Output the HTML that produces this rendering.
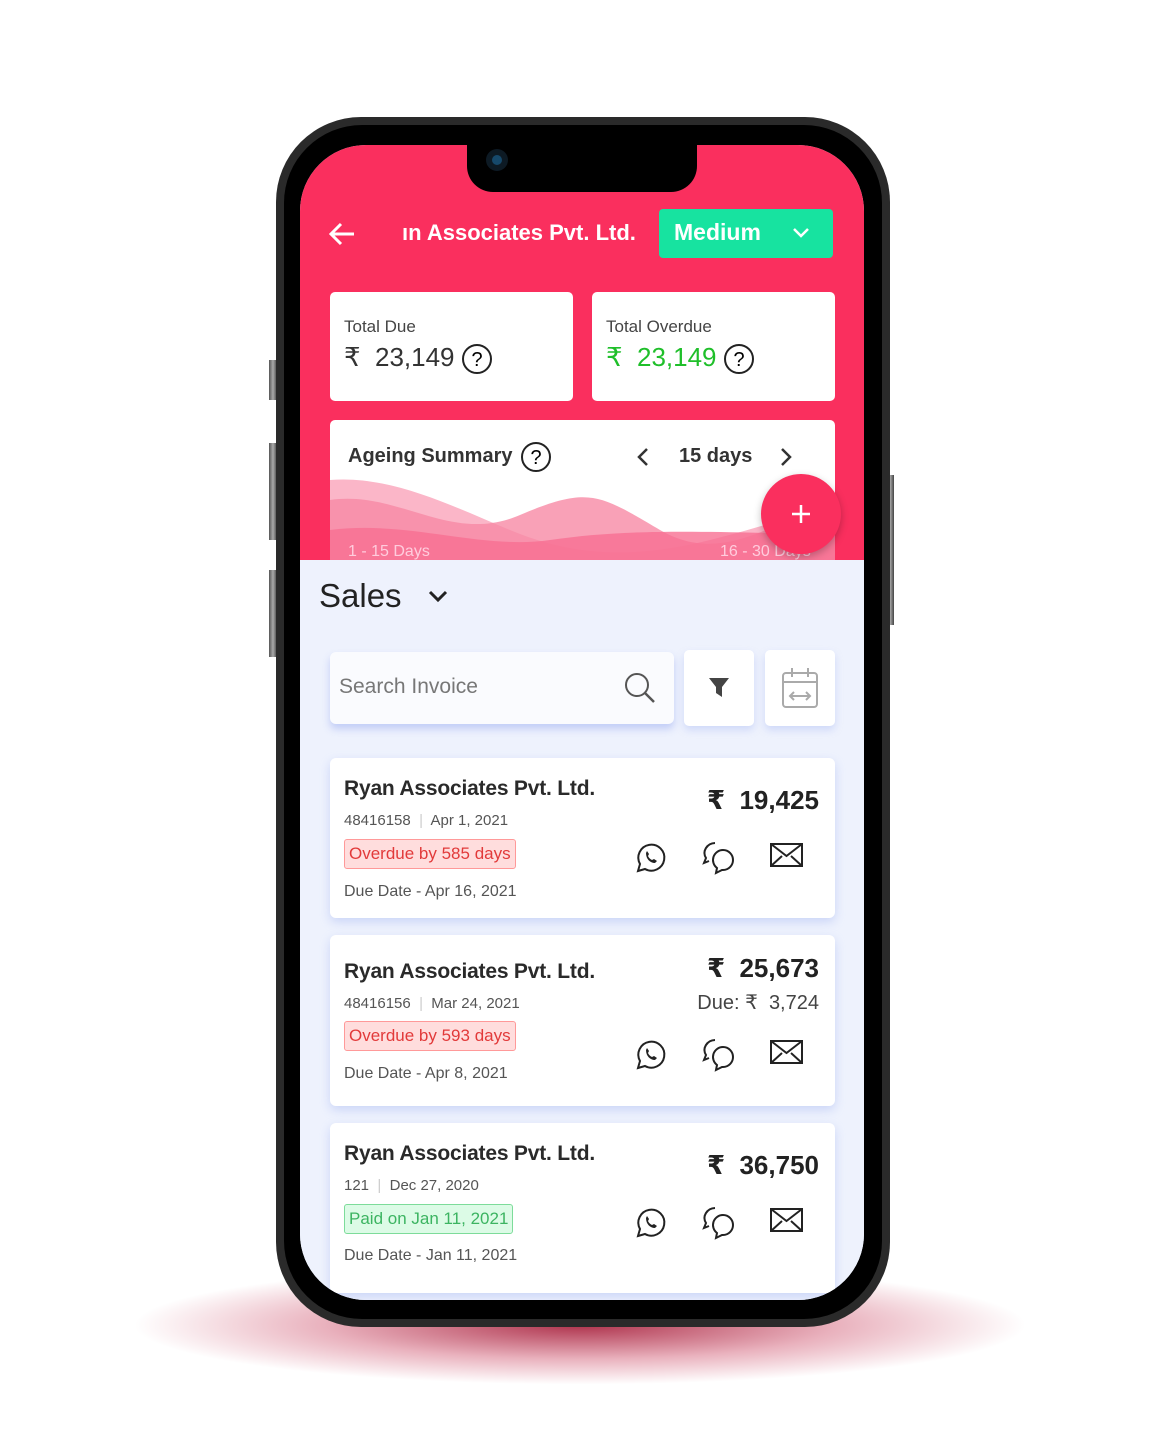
<!DOCTYPE html>
<html><head><meta charset="utf-8"><style>
*{margin:0;padding:0;box-sizing:border-box}
body{width:1157px;height:1444px;background:#fff;position:relative;overflow:hidden;font-family:"Liberation Sans","DejaVu Sans",sans-serif;color:#222}
.a{position:absolute}
.shadow{left:130px;top:1265px;width:900px;height:120px;border-radius:50%;background:radial-gradient(ellipse at center,rgba(160,15,45,.85) 0%,rgba(200,60,90,.4) 40%,rgba(255,255,255,0) 70%)}
.btn{background:linear-gradient(90deg,#555,#aaa,#444);}
.phone{left:276px;top:117px;width:614px;height:1210px;border-radius:85px;background:#2a2a2a}
.phin{left:284px;top:125px;width:598px;height:1194px;border-radius:78px;background:#000}
.screen{left:300px;top:145px;width:564px;height:1155px;border-radius:66px;background:#eef2fd;overflow:hidden}
.pink{left:0;top:0;width:564px;height:415px;background:#fa2f5e}
.card{background:#fff;border-radius:5px}
.ic{stroke:#222;fill:none;stroke-width:2}
.inv{left:30px;width:505px;background:#fff;border-radius:6px;box-shadow:0 4px 10px rgba(150,170,240,.4)}
.inv .t{position:absolute;left:14px;font-size:21px;font-weight:bold;color:#2a2a2a;letter-spacing:-0.2px}
.inv .n{position:absolute;left:14px;font-size:15px;color:#555}
.badge{position:absolute;left:14px;font-size:17px;padding:4px 4px;border-radius:3px}
.red{background:#fdd;border:1px solid #f99;color:#e23a3a}
.grn{background:#dcfbe6;border:1px solid #7ddc9a;color:#3cb461}
.amt{position:absolute;right:16px;font-size:26px;font-weight:bold;color:#222}
</style></head><body>
<div class="a shadow"></div>
<div class="a btn" style="left:269px;top:360px;width:8px;height:40px"></div>
<div class="a btn" style="left:269px;top:443px;width:8px;height:97px"></div>
<div class="a btn" style="left:269px;top:570px;width:8px;height:87px"></div>
<div class="a btn" style="left:886px;top:475px;width:8px;height:150px"></div>
<div class="a phone"></div>
<div class="a phin"></div>
<div class="a screen">
 <div class="a pink"></div>
 <svg class="a" style="left:28px;top:76px" width="28" height="26" viewBox="0 0 28 26"><path d="M26 13H3M13 3L3 13l10 10" stroke="#fff" stroke-width="3" fill="none"/></svg>
 <div class="a" style="left:102px;top:75px;color:#fff;font-size:22px;font-weight:bold;white-space:nowrap">ın Associates Pvt. Ltd.</div>
 <div class="a" style="left:359px;top:64px;width:174px;height:49px;background:#17e3a0;border-radius:4px"></div>
 <div class="a" style="left:374px;top:74px;color:#fff;font-size:23px;font-weight:bold">Medium</div>
 <svg class="a" style="left:492px;top:82px" width="18" height="12"><path d="M2 2l7 7 7-7" stroke="#fff" stroke-width="2.5" fill="none"/></svg>
 <div class="a card" style="left:30px;top:147px;width:243px;height:109px"></div>
 <div class="a" style="left:44px;top:172px;font-size:17px;color:#444">Total Due</div>
 <div class="a" style="left:44px;top:197px;font-size:26px;color:#333">₹&nbsp; 23,149</div>
 <svg class="a" style="left:161px;top:198px" width="32" height="32"><circle cx="16" cy="16" r="14" class="ic" stroke-width="2.5"/><text x="16" y="23" text-anchor="middle" font-size="20" font-family="Liberation Sans">?</text></svg>
 <div class="a card" style="left:292px;top:147px;width:243px;height:109px"></div>
 <div class="a" style="left:306px;top:172px;font-size:17px;color:#444">Total Overdue</div>
 <div class="a" style="left:306px;top:197px;font-size:26px;color:#1fbf2a">₹&nbsp; 23,149</div>
 <svg class="a" style="left:423px;top:198px" width="32" height="32"><circle cx="16" cy="16" r="14" class="ic" stroke-width="2.5"/><text x="16" y="23" text-anchor="middle" font-size="20" font-family="Liberation Sans">?</text></svg>
 <div class="a card" style="left:30px;top:275px;width:505px;height:160px;overflow:hidden">
  <svg class="a" style="left:0;top:55px" width="505" height="85" viewBox="0 0 505 85"><path d="M0 5C60 0 120 30 180 55S300 85 380 65 470 35 505 35V85H0Z" fill="#fbb6c8"/><path d="M0 25C70 15 120 70 190 40S270 20 330 55 440 50 505 25V85H0Z" fill="#f78aa5" opacity=".8"/><path d="M0 55C80 45 150 75 220 65S350 55 505 60V85H0Z" fill="#f76f92" opacity=".8"/></svg>
  <div class="a" style="left:18px;top:123px;font-size:16px;color:#fcd">1 - 15 Days</div>
  <div class="a" style="left:390px;top:123px;font-size:16px;color:#fcd">16 - 30 Days</div>
 </div>
 <div class="a" style="left:48px;top:300px;font-size:20px;color:#333;font-weight:bold">Ageing Summary</div>
 <svg class="a" style="left:220px;top:296px" width="32" height="32"><circle cx="16" cy="16" r="14" class="ic" stroke-width="2.5"/><text x="16" y="23" text-anchor="middle" font-size="20" font-family="Liberation Sans">?</text></svg>
 <svg class="a" style="left:336px;top:302px" width="14" height="20"><path d="M11 2L3 10l8 8" stroke="#333" stroke-width="2.5" fill="none"/></svg>
 <div class="a" style="left:379px;top:300px;font-size:20px;color:#333;font-weight:bold">15 days</div>
 <svg class="a" style="left:479px;top:302px" width="14" height="20"><path d="M3 2l8 8-8 8" stroke="#333" stroke-width="2.5" fill="none"/></svg>
 <div class="a" style="left:461px;top:329px;width:80px;height:80px;border-radius:50%;background:#fa2f5e;box-shadow:0 3px 8px rgba(0,0,0,.25)"></div>
 <svg class="a" style="left:491px;top:359px" width="20" height="20"><path d="M10 1v18M1 10h18" stroke="#fff" stroke-width="2.5"/></svg>
 <div class="a" style="left:0;top:415px;width:564px;height:740px;background:#eef2fd"></div>
 <div class="a" style="left:19px;top:432px;font-size:33px;color:#222">Sales</div>
 <svg class="a" style="left:127px;top:444px" width="22" height="16"><path d="M3 3l8 8 8-8" stroke="#222" stroke-width="3" fill="none"/></svg>
 <div class="a" style="left:30px;top:507px;width:344px;height:72px;background:#fafbfe;border-radius:6px;box-shadow:0 5px 8px rgba(140,160,240,.45)"></div>
 <div class="a" style="left:39px;top:530px;font-size:21px;color:#777">Search Invoice</div>
 <svg class="a" style="left:323px;top:526px" width="34" height="34"><circle cx="14" cy="14" r="11" stroke="#555" stroke-width="2" fill="none"/><path d="M22 22l9 9" stroke="#555" stroke-width="2.5"/></svg>
 <div class="a" style="left:384px;top:505px;width:70px;height:76px;background:#fff;border-radius:5px;box-shadow:0 4px 8px rgba(150,170,240,.35)"></div>
 <svg class="a" style="left:407px;top:530px" width="24" height="26"><path d="M2 3h20l-7 9v10l-6-4v-6z" fill="#444"/></svg>
 <div class="a" style="left:465px;top:505px;width:70px;height:76px;background:#fff;border-radius:5px;box-shadow:0 4px 8px rgba(150,170,240,.35)"></div>
 <svg class="a" style="left:480px;top:520px" width="40" height="46"><rect x="3" y="8" width="34" height="34" rx="3" stroke="#aaa" stroke-width="2" fill="none"/><path d="M3 17h34M12 3v9M28 3v9M10 31h20M14 27l-4 4 4 4M26 27l4 4-4 4" stroke="#aaa" stroke-width="2" fill="none"/></svg>

 <div class="a inv" style="top:613px;height:160px">
  <div class="t" style="top:19px">Ryan Associates Pvt. Ltd.</div>
  <div class="n" style="top:54px">48416158 <span style="color:#ccc">&nbsp;|&nbsp;</span> Apr 1, 2021</div>
  <div class="badge red" style="top:81px">Overdue by 585 days</div>
  <div class="n" style="top:125px;font-size:16px">Due Date - Apr 16, 2021</div>
  <div class="amt" style="top:27px">₹&nbsp; 19,425</div>
 </div>
 <div class="a inv" style="top:790px;height:171px">
  <div class="t" style="top:25px">Ryan Associates Pvt. Ltd.</div>
  <div class="n" style="top:60px">48416156 <span style="color:#ccc">&nbsp;|&nbsp;</span> Mar 24, 2021</div>
  <div class="badge red" style="top:86px">Overdue by 593 days</div>
  <div class="n" style="top:130px;font-size:16px">Due Date - Apr 8, 2021</div>
  <div class="amt" style="top:18px">₹&nbsp; 25,673</div>
  <div class="a" style="right:16px;top:55px;font-size:20px;color:#444">Due: ₹&nbsp; 3,724</div>
 </div>
 <div class="a inv" style="top:978px;height:170px">
  <div class="t" style="top:19px">Ryan Associates Pvt. Ltd.</div>
  <div class="n" style="top:54px">121 <span style="color:#ccc">&nbsp;|&nbsp;</span> Dec 27, 2020</div>
  <div class="badge grn" style="top:81px">Paid on Jan 11, 2021</div>
  <div class="n" style="top:124px;font-size:16px">Due Date - Jan 11, 2021</div>
  <div class="amt" style="top:27px">₹&nbsp; 36,750</div>
 </div>
</div>
<svg class="a" style="left:0;top:0" width="1157" height="1444">
 <defs><g id="ics">
  <path d="M4 30l2-7a13 13 0 1 1 5 5z" class="ic"/><path d="M12 12c0 6 4 10 9 10l2-2-3-2-2 1c-2-1-3-2-4-4l1-2-2-3z" fill="#222"/>
  <g transform="translate(68,0)"><path d="M13 2a11 10 0 0 0-9 15l-2 5 5-2" class="ic"/><path d="M21 9a10 10 0 1 1 0 20h-1l-6 3 1-5a10 10 0 0 1 6-18z" class="ic"/></g>
  <g transform="translate(137,3)"><rect x="0" y="0" width="31" height="22" class="ic"/><path d="M0 0l15.5 12L31 0M0 22l11-10M31 22L20 12" class="ic"/></g>
 </g></defs>
 <use href="#ics" x="634" y="841"/>
 <use href="#ics" x="634" y="1038"/>
 <use href="#ics" x="634" y="1206"/>
</svg>
<div class="a" style="left:467px;top:140px;width:230px;height:52px;background:#000;border-radius:0 0 26px 26px"></div>
<svg class="a" style="left:484px;top:147px" width="26" height="26"><circle cx="13" cy="13" r="11" fill="#0d1a24"/><circle cx="13" cy="13" r="5" fill="#16496b"/></svg>
</body></html>
